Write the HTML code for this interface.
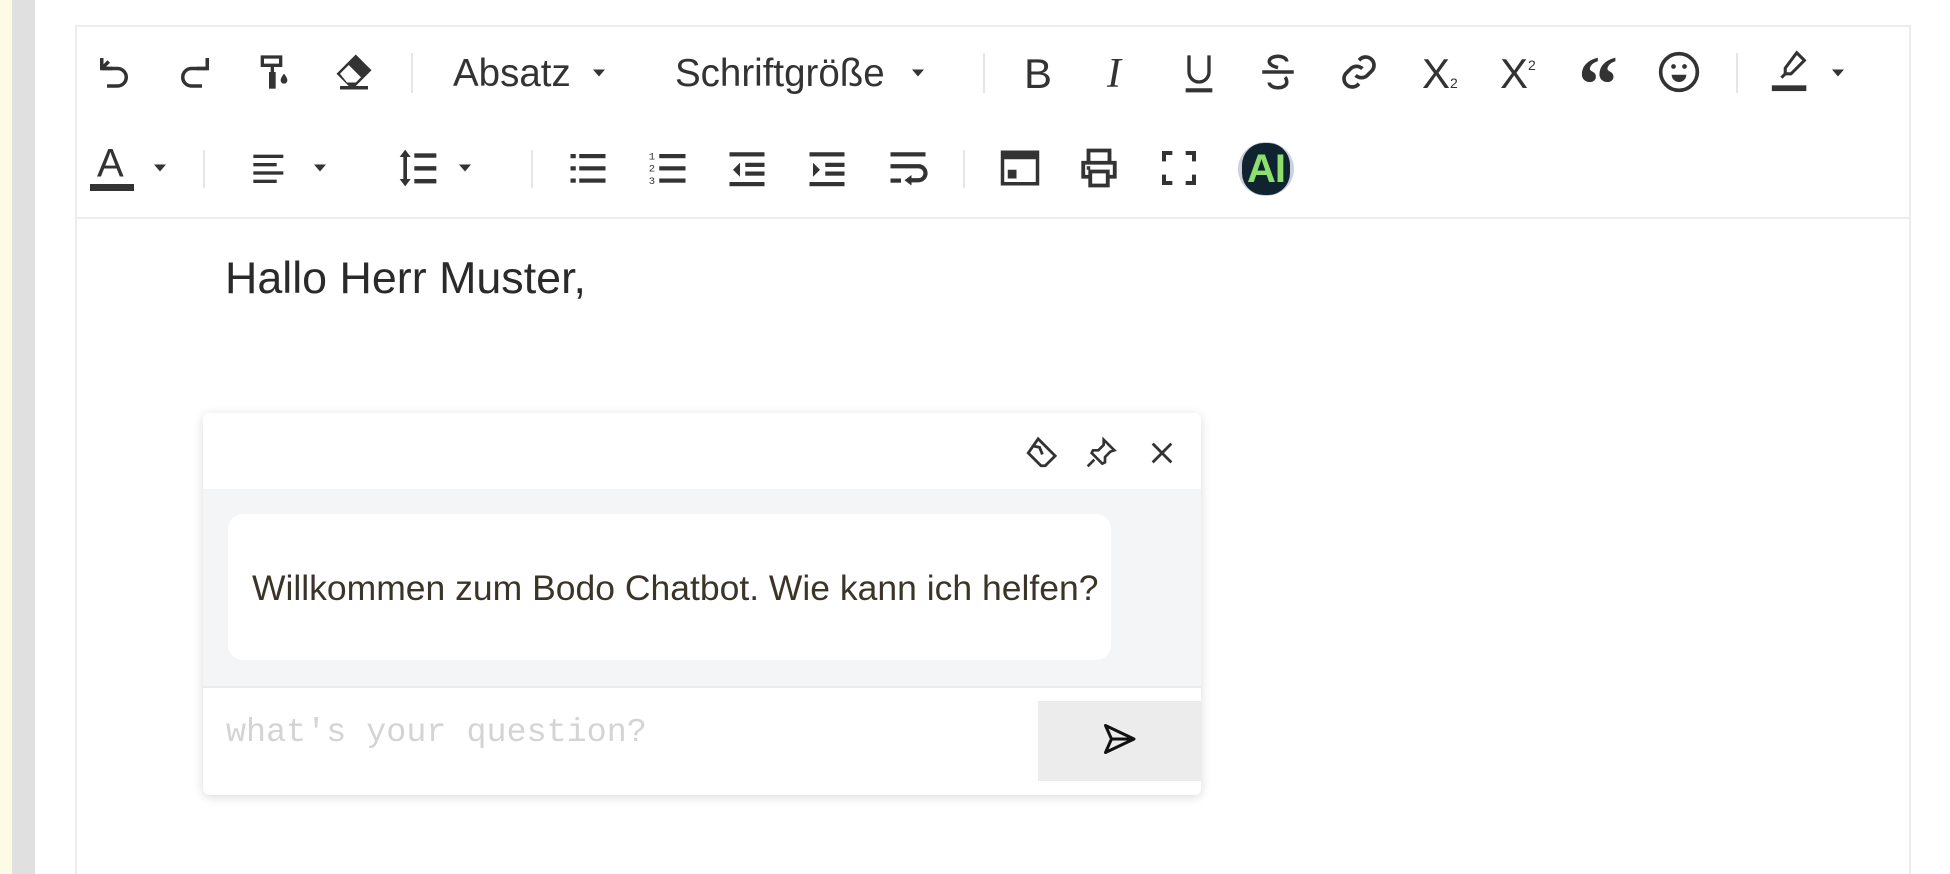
<!DOCTYPE html>
<html><head><meta charset="utf-8"><style>
*{margin:0;padding:0;box-sizing:border-box}
html,body{width:1950px;height:874px;overflow:hidden}
body{background:#fff;position:relative;font-family:"Liberation Sans",Arial,sans-serif;color:#333}
.a{position:absolute}
.ic{position:absolute;transform:translate(-50%,-50%)}
.sep{position:absolute;width:2px;background:#e6e6e6}
.tri{position:absolute;width:0;height:0;border-left:6px solid transparent;border-right:6px solid transparent;border-top:7px solid #333;transform:translate(-50%,-50%)}
.lbl{position:absolute;font-size:38.5px;color:#333;transform:translateY(-50%)}
</style></head><body>
<div class="a" style="left:0;top:0;width:12px;height:874px;background:#fdfbe6"></div>
<div class="a" style="left:12px;top:0;width:23px;height:874px;background:#e0e0e0"></div>
<div class="a" style="left:75px;top:25px;width:1836px;height:849px;border:2px solid #ececec;border-bottom:none;background:#fff"></div>
<div class="a" style="left:77px;top:217px;width:1832px;height:2px;background:#ececec"></div>

<!-- row 1 -->
<svg class="ic" style="left:114px;top:72px" width="42" height="42" viewBox="0 0 24 24" fill="none" stroke="#333" stroke-width="2"><path d="M5 4v6h6"/><path d="M5 10l4-4M5 10h9a5 5 0 0 1 0 10H8"/></svg>
<svg class="ic" style="left:195px;top:72px" width="42" height="42" viewBox="0 0 24 24" fill="none" stroke="#333" stroke-width="2"><path d="M19 4v6h-6"/><path d="M19 10h-9a5 5 0 0 0 0 10h6"/></svg>
<svg class="ic" style="left:274px;top:72px" width="40" height="42" viewBox="0 0 24 24" fill="#333"><path d="M4 2h13v7H4z M6 4v3h9V4z"/><rect x="10" y="9" width="2" height="3"/><rect x="9" y="12" width="4" height="10"/><path d="M18 13c1.5 2 2 3 2 4a2 2 0 0 1-4 0c0-1 .5-2 2-4z"/></svg>
<svg class="ic" style="left:354px;top:72px" width="42" height="42" viewBox="0 0 24 24" fill="#333"><path d="M13 2l9 9-9 9H9l-7-7z"/><path d="M4 13l5-5 7 7-3 3H8z" fill="#fff"/><rect x="4" y="20" width="16" height="2"/></svg>
<div class="sep" style="left:411px;top:53px;height:40px"></div>
<div class="lbl" style="left:453px;top:74px">Absatz</div>
<div class="tri" style="left:599px;top:73px"></div>
<div class="lbl" style="left:675px;top:74px">Schriftgröße</div>
<div class="tri" style="left:918px;top:73px"></div>
<div class="sep" style="left:983px;top:53px;height:40px"></div>
<div class="lbl" style="left:1024px;top:74px;font-size:42px">B</div>
<div class="lbl" style="left:1107px;top:74px;font-size:42px;font-family:'Liberation Serif',serif;font-style:italic">I</div>
<svg class="ic" style="left:1199px;top:72px" width="40" height="44" viewBox="0 0 24 26" fill="none" stroke="#333" stroke-width="2"><path d="M6 3v10a6 6 0 0 0 12 0V3"/><path d="M4 24h16" stroke-width="2.5"/></svg>
<svg class="ic" style="left:1278px;top:72px" width="42" height="42" viewBox="0 0 24 24" fill="none" stroke="#333" stroke-width="2"><path d="M17 6a5 3 0 0 0-10 0c0 2 3 3 5 3.5"/><path d="M3 12h18"/><path d="M16 15c1 1 1 2 1 3a5 3 0 0 1-10 0"/></svg>
<svg class="ic" style="left:1359px;top:72px" width="40" height="40" viewBox="0 0 24 24" fill="none" stroke="#333" stroke-width="2.2"><path d="M10 14a5 5 0 0 0 7 0l3-3a5 5 0 0 0-7-7l-1 1"/><path d="M14 10a5 5 0 0 0-7 0l-3 3a5 5 0 0 0 7 7l1-1"/></svg>
<div class="lbl" style="left:1422px;top:74px;font-size:42px">X<span style="font-size:14px">2</span></div>
<div class="lbl" style="left:1500px;top:74px;font-size:42px">X<span style="font-size:14px;vertical-align:18px">2</span></div>
<div class="lbl" style="left:1578px;top:86px;font-size:80px;font-weight:bold;font-family:'Liberation Serif',serif">“</div>
<svg class="ic" style="left:1679px;top:72px" width="44" height="44" viewBox="0 0 24 24" fill="none" stroke="#333" stroke-width="2"><circle cx="12" cy="12" r="10"/><circle cx="9" cy="9" r="1.3" fill="#333" stroke="none"/><circle cx="15" cy="9" r="1.3" fill="#333" stroke="none"/><path d="M8 13.5h8a4 4 0 0 1-8 0z" fill="#333" stroke="none"/></svg>
<div class="sep" style="left:1736px;top:53px;height:40px"></div>
<svg class="ic" style="left:1791px;top:70px" width="46" height="46" viewBox="0 0 24 24" fill="none" stroke="#333" stroke-width="1.6"><path d="M15 3l4 4-7 7-3 0 0-3z"/><path d="M9 14l-2 2"/><rect x="2" y="20" width="18" height="3" fill="#333" stroke="none"/></svg>
<div class="tri" style="left:1838px;top:73px"></div>

<!-- row 2 -->
<div class="lbl" style="left:97px;top:164px;font-size:40px">A</div>
<div class="a" style="left:90px;top:184px;width:44px;height:7px;background:#333"></div>
<div class="tri" style="left:160px;top:168px"></div>
<div class="sep" style="left:203px;top:150px;height:38px"></div>
<svg class="ic" style="left:270px;top:168px" width="40" height="40" viewBox="0 0 24 24" fill="#333"><rect x="2" y="4" width="18" height="2"/><rect x="2" y="9" width="14" height="2"/><rect x="2" y="14" width="18" height="2"/><rect x="2" y="19" width="14" height="2"/></svg>
<div class="tri" style="left:320px;top:168px"></div>
<svg class="ic" style="left:418px;top:168px" width="44" height="44" viewBox="0 0 24 24" fill="#333"><path d="M5 2l3 4H6v12h2l-3 4-3-4h2V6H2z"/><rect x="10" y="4" width="12" height="2.4"/><rect x="10" y="11" width="12" height="2.4"/><rect x="10" y="18" width="12" height="2.4"/></svg>
<div class="tri" style="left:465px;top:168px"></div>
<div class="sep" style="left:531px;top:150px;height:38px"></div>
<svg class="ic" style="left:588px;top:168px" width="42" height="42" viewBox="0 0 24 24" fill="#333"><rect x="2" y="4" width="3" height="2.4"/><rect x="7" y="4" width="15" height="2.4"/><rect x="2" y="11" width="3" height="2.4"/><rect x="7" y="11" width="15" height="2.4"/><rect x="2" y="18" width="3" height="2.4"/><rect x="7" y="18" width="15" height="2.4"/></svg>
<svg class="ic" style="left:668px;top:168px" width="42" height="42" viewBox="0 0 24 24" fill="#333"><text x="1" y="7" font-size="6" font-family="Liberation Mono">1</text><text x="1" y="14" font-size="6" font-family="Liberation Mono">2</text><text x="1" y="21" font-size="6" font-family="Liberation Mono">3</text><rect x="7" y="4" width="15" height="2.4"/><rect x="7" y="11" width="15" height="2.4"/><rect x="7" y="18" width="15" height="2.4"/></svg>
<svg class="ic" style="left:747px;top:168px" width="42" height="42" viewBox="0 0 24 24" fill="#333"><rect x="2" y="3" width="20" height="2.4"/><rect x="11" y="9" width="11" height="2.4"/><rect x="11" y="14" width="11" height="2.4"/><rect x="2" y="20" width="20" height="2.4"/><path d="M8 9v8l-4-4z"/></svg>
<svg class="ic" style="left:827px;top:168px" width="42" height="42" viewBox="0 0 24 24" fill="#333"><rect x="2" y="3" width="20" height="2.4"/><rect x="11" y="9" width="11" height="2.4"/><rect x="11" y="14" width="11" height="2.4"/><rect x="2" y="20" width="20" height="2.4"/><path d="M4 9v8l4-4z"/></svg>
<svg class="ic" style="left:908px;top:168px" width="42" height="42" viewBox="0 0 24 24" fill="#333"><rect x="2" y="3" width="20" height="2.4"/><path d="M2 11h16a4 4 0 0 1 0 8h-4" fill="none" stroke="#333" stroke-width="2.4"/><path d="M14 16v6l-4-3z"/><rect x="2" y="18" width="6" height="2.4"/></svg>
<div class="sep" style="left:963px;top:150px;height:38px"></div>
<svg class="ic" style="left:1020px;top:168px" width="42" height="40" viewBox="0 0 24 22" fill="#333"><path d="M1 1h22v20H1z M3 6v13h18V6z"/><rect x="5" y="12" width="5" height="5"/></svg>
<svg class="ic" style="left:1099px;top:168px" width="42" height="44" viewBox="0 0 24 24" fill="none" stroke="#333" stroke-width="2.2"><path d="M6 8V2h12v6"/><path d="M6 17H3V9h18v8h-3"/><path d="M7 14h10v8H7z"/><rect x="5" y="11" width="2" height="2" fill="#333" stroke="none"/></svg>
<svg class="ic" style="left:1179px;top:168px" width="40" height="40" viewBox="0 0 24 24" fill="none" stroke="#333" stroke-width="2.4"><path d="M3 8V3h5M16 3h5v5M21 16v5h-5M8 21H3v-5"/></svg>
<div class="a" style="left:1238px;top:142px;width:56px;height:54px;border-radius:50%;background:#c9d2dc"></div>
<div class="a" style="left:1242px;top:143px;width:48px;height:52px;border-radius:22px;background:#0f2430;color:#8ee06e;font-weight:bold;font-size:40px;text-align:center;line-height:52px;letter-spacing:-1px">AI</div>

<!-- text -->
<div class="a" style="left:225px;top:253px;font-size:44.8px;color:#2a2a2a">Hallo Herr Muster,</div>

<!-- chat popup -->
<div class="a" style="left:203px;top:413px;width:998px;height:382px;background:#fff;border-radius:6px;box-shadow:0 2px 10px rgba(0,0,0,.15);overflow:hidden">
  <div class="a" style="left:0;top:76px;width:998px;height:199px;background:#f4f5f7;border-bottom:2px solid #ebebeb"></div>
  <div class="a" style="left:25px;top:101px;width:883px;height:146px;background:#fff;border-radius:15px"></div>
  <div class="a" style="left:49px;top:155px;font-size:35.5px;color:#3a3528;white-space:nowrap">Willkommen zum Bodo Chatbot. Wie kann ich helfen?</div>
  <div class="a" style="left:23px;top:301px;font-family:'Liberation Mono',monospace;font-size:33.4px;color:#d4d4d4">what's your question?</div>
  <div class="a" style="left:835px;top:288px;width:163px;height:80px;background:#ececec"></div>
</div>
<svg class="ic" style="left:1041px;top:453px" width="34" height="34" viewBox="0 0 24 24" fill="none" stroke="#333" stroke-width="2"><path d="M10 2l12 12-7 7-3 0-9-9z"/><path d="M6 7l5 1 2 5"/></svg>
<svg class="ic" style="left:1101px;top:453px" width="32" height="34" viewBox="0 0 24 24" fill="none" stroke="#333" stroke-width="2"><path d="M14 2l8 8-3 1-4 4 0 4-2 1-8-8 1-2 4 0 4-4z"/><path d="M7 17l-5 5"/></svg>
<svg class="ic" style="left:1162px;top:453px" width="28" height="28" viewBox="0 0 24 24" fill="none" stroke="#333" stroke-width="2.4"><path d="M4 4l16 16M20 4L4 20"/></svg>
<svg class="ic" style="left:1119px;top:739px" width="36" height="36" viewBox="0 0 24 24" fill="none" stroke="#111" stroke-width="2" stroke-linejoin="round"><path d="M3 3l19 9-19 9 4-9z"/><path d="M7 12h14"/></svg>
</body></html>
